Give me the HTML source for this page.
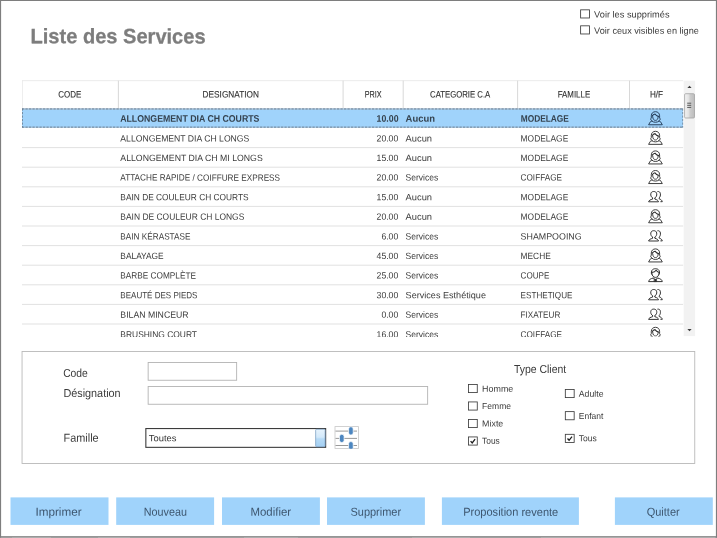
<!DOCTYPE html>
<html lang="fr">
<head>
<meta charset="utf-8">
<title>Liste des Services</title>
<style>
*{box-sizing:border-box;margin:0;padding:0}
html,body{width:717px;height:538px;overflow:hidden;background:#fff}
body{font-family:"Liberation Sans",sans-serif;font-size:9.7px;color:#3a3a3a;position:relative}
#root{position:absolute;left:0;top:0;width:717px;height:538px;overflow:hidden;will-change:transform;background:#fff;text-rendering:geometricPrecision}
#root div,#root span,#root svg{position:absolute}
#art{left:0;top:0}
.t{left:0;top:0;white-space:nowrap;display:block;transform-origin:0 0}
#grid{left:22px;top:80px;width:661.6px;height:256.5px;overflow:hidden}
#gin{left:-22px;top:-80px;width:717px;height:538px}
</style>
</head>
<body>
<div id="root">

<svg id="art" width="717" height="538" viewBox="0 0 717 538" style="color:#2a2a2a">
<defs>
<linearGradient id="gth" x1="0" x2="1" y1="0" y2="0"><stop offset="0" stop-color="#f4f4f4"/><stop offset=".4" stop-color="#e2e2e2"/><stop offset=".55" stop-color="#cdcdcd"/><stop offset="1" stop-color="#bcbcbc"/></linearGradient>
<linearGradient id="gdd" x1="0" x2="0" y1="0" y2="1"><stop offset="0" stop-color="#e6f3fd"/><stop offset=".45" stop-color="#d3e9fa"/><stop offset=".55" stop-color="#b6daf6"/><stop offset="1" stop-color="#a4d0f3"/></linearGradient>
<clipPath id="cg"><rect x="22" y="80" width="661.6" height="256.5"/></clipPath>
<clipPath id="cs"><rect x="334.6" y="426.2" width="24.3" height="22.6"/></clipPath>
</defs>
<rect x="0.00" y="0.00" width="717.00" height="1.00" fill="#7e7e7e"/>
<rect x="0.00" y="0.00" width="1.10" height="538.00" fill="#7e7e7e"/>
<rect x="715.90" y="0.00" width="1.10" height="538.00" fill="#7e7e7e"/>
<rect x="0.00" y="536.20" width="717.00" height="1.00" fill="#7c7c7c"/>
<rect x="0.00" y="537.20" width="717.00" height="0.80" fill="#8e8e8e"/>
<rect x="12.00" y="537.30" width="39.00" height="0.70" fill="#b4b4b4"/>
<rect x="98.00" y="537.30" width="32.00" height="0.70" fill="#b4b4b4"/>
<rect x="244.00" y="537.30" width="54.00" height="0.70" fill="#b4b4b4"/>
<rect x="412.00" y="537.30" width="58.00" height="0.70" fill="#b4b4b4"/>
<rect x="541.00" y="537.30" width="174.00" height="0.70" fill="#b4b4b4"/>
<rect x="580.62" y="9.83" width="8.85" height="8.15" fill="#fff" stroke="#3c3c3c" stroke-width="0.85"/>
<rect x="580.62" y="25.82" width="8.85" height="8.15" fill="#fff" stroke="#3c3c3c" stroke-width="0.85"/>
<g clip-path="url(#cg)">
<path d="M22.00 80.70H683.20" stroke="#e9e9e9" stroke-width="0.9"/>
<path d="M22.20 80.70V108.50" stroke="#e4e4e4" stroke-width="0.9"/>
<path d="M118.40 80.70V108.50" stroke="#d4d4d4" stroke-width="0.9"/>
<path d="M343.10 80.70V108.50" stroke="#d4d4d4" stroke-width="0.9"/>
<path d="M403.20 80.70V108.50" stroke="#d4d4d4" stroke-width="0.9"/>
<path d="M517.60 80.70V108.50" stroke="#d4d4d4" stroke-width="0.9"/>
<path d="M629.50 80.70V108.50" stroke="#d4d4d4" stroke-width="0.9"/>
<path d="M22.00 147.60H683.20" stroke="#dcdcdc" stroke-width="0.85"/>
<path d="M22.00 167.20H683.20" stroke="#dcdcdc" stroke-width="0.85"/>
<path d="M22.00 186.80H683.20" stroke="#dcdcdc" stroke-width="0.85"/>
<path d="M22.00 206.40H683.20" stroke="#dcdcdc" stroke-width="0.85"/>
<path d="M22.00 226.00H683.20" stroke="#dcdcdc" stroke-width="0.85"/>
<path d="M22.00 245.60H683.20" stroke="#dcdcdc" stroke-width="0.85"/>
<path d="M22.00 265.20H683.20" stroke="#dcdcdc" stroke-width="0.85"/>
<path d="M22.00 284.80H683.20" stroke="#dcdcdc" stroke-width="0.85"/>
<path d="M22.00 304.40H683.20" stroke="#dcdcdc" stroke-width="0.85"/>
<path d="M22.00 324.00H683.20" stroke="#dcdcdc" stroke-width="0.85"/>
<path d="M22.00 343.60H683.20" stroke="#dcdcdc" stroke-width="0.85"/>
<rect x="22.00" y="108.50" width="661.20" height="19.00" fill="#a0d3fb"/>
<path d="M22.00 108.95H683.20" stroke="#a9b4bf" stroke-width="0.85"/>
<path d="M22.00 108.95H683.20" stroke="#66778a" stroke-width="0.85" stroke-dasharray="2.2 1.3"/>
<path d="M22.00 127.15H683.20" stroke="#98b9d6" stroke-width="0.85"/>
<path d="M22.00 127.15H683.20" stroke="#66778a" stroke-width="0.85" stroke-dasharray="2.2 1.3"/>
<path d="M22.40 108.50V127.50" stroke="#66778a" stroke-width="0.85" stroke-dasharray="2.2 1.3"/>
<path d="M682.80 108.50V127.50" stroke="#66778a" stroke-width="0.85" stroke-dasharray="2.2 1.3"/>
<g transform="translate(648 108.40)" style="color:#1d3450" fill="none" stroke="currentColor" stroke-width=".9" stroke-linejoin="round" stroke-linecap="round">
<path d="M3.600 12.100C2.500 11.800 2.300 10.600 3.300 9.600V7.400C3.300 4.800 5.100 3.300 7.450 3.300S11.600 4.800 11.600 7.400V9.600C12.600 10.600 12.400 11.800 11.300 12.100"/>
<path d="M4.700 8.300C4.700 10.600 5.900 12 7.450 12S10.200 10.600 10.200 8.300"/>
<path d="M4.300 7.500C5 6.300 6 5.700 7 5.600 8 6.900 9 7.600 10.500 8" stroke-width="1.100"/>
<path d="M4.300 12.900C3.400 12.900 2.800 13 2.400 13.300L.6 16.350H14.300L12.500 13.300C12.100 13 11.500 12.900 10.600 12.900"/>
<path d="M4.300 12.900C5.300 14.300 9.600 14.300 10.600 12.900"/></g>
<g transform="translate(648 128.00)" fill="none" stroke="currentColor" stroke-width=".9" stroke-linejoin="round" stroke-linecap="round">
<path d="M3.600 12.100C2.500 11.800 2.300 10.600 3.300 9.600V7.400C3.300 4.800 5.100 3.300 7.450 3.300S11.600 4.800 11.600 7.400V9.600C12.600 10.600 12.400 11.800 11.300 12.100"/>
<path d="M4.700 8.300C4.700 10.600 5.900 12 7.450 12S10.200 10.600 10.200 8.300"/>
<path d="M4.300 7.500C5 6.300 6 5.700 7 5.600 8 6.900 9 7.600 10.500 8" stroke-width="1.100"/>
<path d="M4.300 12.900C3.400 12.900 2.800 13 2.400 13.300L.6 16.350H14.300L12.500 13.300C12.100 13 11.500 12.900 10.600 12.900"/>
<path d="M4.300 12.900C5.300 14.300 9.600 14.300 10.600 12.900"/></g>
<g transform="translate(648 147.60)" fill="none" stroke="currentColor" stroke-width=".9" stroke-linejoin="round" stroke-linecap="round">
<path d="M3.600 12.100C2.500 11.800 2.300 10.600 3.300 9.600V7.400C3.300 4.800 5.100 3.300 7.450 3.300S11.600 4.800 11.600 7.400V9.600C12.600 10.600 12.400 11.800 11.300 12.100"/>
<path d="M4.700 8.300C4.700 10.600 5.900 12 7.450 12S10.200 10.600 10.200 8.300"/>
<path d="M4.300 7.500C5 6.300 6 5.700 7 5.600 8 6.900 9 7.600 10.500 8" stroke-width="1.100"/>
<path d="M4.300 12.900C3.400 12.900 2.800 13 2.400 13.300L.6 16.350H14.300L12.500 13.300C12.100 13 11.500 12.900 10.600 12.900"/>
<path d="M4.300 12.900C5.300 14.300 9.600 14.300 10.600 12.900"/></g>
<g transform="translate(648 167.20)" fill="none" stroke="currentColor" stroke-width=".9" stroke-linejoin="round" stroke-linecap="round">
<path d="M3.600 12.100C2.500 11.800 2.300 10.600 3.300 9.600V7.400C3.300 4.800 5.100 3.300 7.450 3.300S11.600 4.800 11.600 7.400V9.600C12.600 10.600 12.400 11.800 11.300 12.100"/>
<path d="M4.700 8.300C4.700 10.600 5.900 12 7.450 12S10.200 10.600 10.200 8.300"/>
<path d="M4.300 7.500C5 6.300 6 5.700 7 5.600 8 6.900 9 7.600 10.500 8" stroke-width="1.100"/>
<path d="M4.300 12.900C3.400 12.900 2.800 13 2.400 13.300L.6 16.350H14.300L12.500 13.300C12.100 13 11.500 12.900 10.600 12.900"/>
<path d="M4.300 12.900C5.300 14.300 9.600 14.300 10.600 12.900"/></g>
<g transform="translate(648 186.80)" fill="none" stroke="currentColor" stroke-width=".95" stroke-linejoin="round" stroke-linecap="round">
<path d="M4.600 11.300C3.200 10.300 2.500 8.600 2.800 7 3.100 5.300 4.200 4.700 5.750 4.700S8.400 5.300 8.700 7C9 8.600 8.300 10.300 6.900 11.300"/>
<path d="M4.600 11.300V12.300C2.600 12.900 1 13.400 .6 15H10.500C10.100 13.400 8.900 12.900 6.900 12.300V11.300"/>
<path d="M9.800 4.700C11.300 4.500 12.200 5.400 12.400 7 12.600 8.600 12.200 10.100 11.200 11.100V12.100C12.800 12.600 13.900 13.300 14.300 14.900H12.800"/></g>
<g transform="translate(648 206.40)" fill="none" stroke="currentColor" stroke-width=".9" stroke-linejoin="round" stroke-linecap="round">
<path d="M3.600 12.100C2.500 11.800 2.300 10.600 3.300 9.600V7.400C3.300 4.800 5.100 3.300 7.450 3.300S11.600 4.800 11.600 7.400V9.600C12.600 10.600 12.400 11.800 11.300 12.100"/>
<path d="M4.700 8.300C4.700 10.600 5.900 12 7.450 12S10.200 10.600 10.200 8.300"/>
<path d="M4.300 7.500C5 6.300 6 5.700 7 5.600 8 6.900 9 7.600 10.500 8" stroke-width="1.100"/>
<path d="M4.300 12.900C3.400 12.900 2.800 13 2.400 13.300L.6 16.350H14.300L12.500 13.300C12.100 13 11.500 12.900 10.600 12.900"/>
<path d="M4.300 12.900C5.300 14.300 9.600 14.300 10.600 12.900"/></g>
<g transform="translate(648 226.00)" fill="none" stroke="currentColor" stroke-width=".95" stroke-linejoin="round" stroke-linecap="round">
<path d="M4.600 11.300C3.200 10.300 2.500 8.600 2.800 7 3.100 5.300 4.200 4.700 5.750 4.700S8.400 5.300 8.700 7C9 8.600 8.300 10.300 6.900 11.300"/>
<path d="M4.600 11.300V12.300C2.600 12.900 1 13.400 .6 15H10.500C10.100 13.400 8.900 12.900 6.900 12.300V11.300"/>
<path d="M9.800 4.700C11.300 4.500 12.200 5.400 12.400 7 12.600 8.600 12.200 10.100 11.200 11.100V12.100C12.800 12.600 13.900 13.300 14.300 14.900H12.800"/></g>
<g transform="translate(648 245.60)" fill="none" stroke="currentColor" stroke-width=".9" stroke-linejoin="round" stroke-linecap="round">
<path d="M3.600 12.100C2.500 11.800 2.300 10.600 3.300 9.600V7.400C3.300 4.800 5.100 3.300 7.450 3.300S11.600 4.800 11.600 7.400V9.600C12.600 10.600 12.400 11.800 11.300 12.100"/>
<path d="M4.700 8.300C4.700 10.600 5.900 12 7.450 12S10.200 10.600 10.200 8.300"/>
<path d="M4.300 7.500C5 6.300 6 5.700 7 5.600 8 6.900 9 7.600 10.500 8" stroke-width="1.100"/>
<path d="M4.300 12.900C3.400 12.900 2.800 13 2.400 13.300L.6 16.350H14.300L12.500 13.300C12.100 13 11.500 12.900 10.600 12.900"/>
<path d="M4.300 12.900C5.300 14.300 9.600 14.300 10.600 12.900"/></g>
<g transform="translate(648 265.20)" fill="none" stroke="currentColor" stroke-width=".95" stroke-linejoin="round" stroke-linecap="round">
<path d="M3.500 8.900C2.700 5.400 4.500 3.500 7.450 3.500S12.200 5.400 11.400 8.900"/>
<path d="M3.800 7.200C5.900 7.100 7.300 6.300 8.100 5 8.900 6.200 10 7 11.100 7.300" stroke-width="1.100"/>
<path d="M4 8.400C4 10.600 5.500 12.200 7.450 12.200S10.900 10.600 10.900 8.400"/>
<path d="M5 12.900C2.600 13.500 1 14.200 .6 16.400H14.300C13.900 14.200 12.300 13.500 9.900 12.900"/>
<path d="M6.300 14.100h2.300v2.300h-2.300z" fill="currentColor" stroke-width=".5"/>
<path d="M5.300 13 7.450 14.300 9.600 13" stroke-width=".8"/></g>
<g transform="translate(648 284.80)" fill="none" stroke="currentColor" stroke-width=".95" stroke-linejoin="round" stroke-linecap="round">
<path d="M4.600 11.300C3.200 10.300 2.500 8.600 2.800 7 3.100 5.300 4.200 4.700 5.750 4.700S8.400 5.300 8.700 7C9 8.600 8.300 10.300 6.900 11.300"/>
<path d="M4.600 11.300V12.300C2.600 12.900 1 13.400 .6 15H10.500C10.100 13.400 8.900 12.900 6.900 12.300V11.300"/>
<path d="M9.800 4.700C11.300 4.500 12.200 5.400 12.400 7 12.600 8.600 12.200 10.100 11.200 11.100V12.100C12.800 12.600 13.900 13.300 14.300 14.900H12.800"/></g>
<g transform="translate(648 304.40)" fill="none" stroke="currentColor" stroke-width=".95" stroke-linejoin="round" stroke-linecap="round">
<path d="M4.600 11.300C3.200 10.300 2.500 8.600 2.800 7 3.100 5.300 4.200 4.700 5.750 4.700S8.400 5.300 8.700 7C9 8.600 8.300 10.300 6.900 11.300"/>
<path d="M4.600 11.300V12.300C2.600 12.900 1 13.400 .6 15H10.500C10.100 13.400 8.900 12.900 6.900 12.300V11.300"/>
<path d="M9.800 4.700C11.300 4.500 12.200 5.400 12.400 7 12.600 8.600 12.200 10.100 11.200 11.100V12.100C12.800 12.600 13.900 13.300 14.300 14.900H12.800"/></g>
<g transform="translate(648 324.00)" fill="none" stroke="currentColor" stroke-width=".9" stroke-linejoin="round" stroke-linecap="round">
<path d="M3.600 12.100C2.500 11.800 2.300 10.600 3.300 9.600V7.400C3.300 4.800 5.100 3.300 7.450 3.300S11.600 4.800 11.600 7.400V9.600C12.600 10.600 12.400 11.800 11.300 12.100"/>
<path d="M4.700 8.300C4.700 10.600 5.900 12 7.450 12S10.200 10.600 10.200 8.300"/>
<path d="M4.300 7.500C5 6.300 6 5.700 7 5.600 8 6.900 9 7.600 10.500 8" stroke-width="1.100"/>
<path d="M4.300 12.900C3.400 12.900 2.800 13 2.400 13.300L.6 16.350H14.300L12.500 13.300C12.100 13 11.500 12.900 10.600 12.900"/>
<path d="M4.300 12.900C5.300 14.300 9.600 14.300 10.600 12.900"/></g>
</g>
<rect x="683.70" y="80.70" width="11.40" height="255.40" fill="#f2f2f2"/>
<rect x="684.60" y="93.70" width="9.90" height="24.30" fill="url(#gth)" stroke="#a3a3a3" stroke-width="0.8" rx="1.1"/>
<path d="M687.400 88 689.500 85.800 691.600 88z" fill="#3c3c3c"/>
<path d="M687.400 329 689.500 331.200 691.600 329z" fill="#3c3c3c"/>
<path d="M687.200 103.200h4M687.200 105.300h4M687.200 107.400h4" stroke="#4a4a4a" stroke-width=".9"/>
<rect x="22.05" y="351.55" width="672.70" height="112.00" fill="none" stroke="#b9b9b9" stroke-width="0.9"/>
<rect x="148.15" y="362.45" width="88.50" height="17.80" fill="#fff" stroke="#b3b3b3" stroke-width="0.9"/>
<rect x="148.15" y="386.45" width="279.50" height="17.80" fill="#fff" stroke="#b3b3b3" stroke-width="0.9"/>
<rect x="145.85" y="428.55" width="179.80" height="18.80" fill="#fff" stroke="#3c3c3c" stroke-width="1.1"/>
<rect x="315.65" y="429.25" width="9.50" height="17.50" fill="url(#gdd)" stroke="#7097bb" stroke-width="0.7" rx="1"/>
<rect x="335.00" y="426.60" width="23.50" height="21.80" fill="#fff" stroke="#c6c6c6" stroke-width="0.8"/>
<g clip-path="url(#cs)">
<path d="M335.50 431.10H357.00" stroke="#9a9a9a" stroke-width="1"/>
<path d="M335.50 438.40H357.00" stroke="#9a9a9a" stroke-width="1"/>
<path d="M335.50 445.50H357.00" stroke="#9a9a9a" stroke-width="1"/>
<rect x="348.60" y="426.80" width="4.60" height="8.20" fill="#4c86c0" stroke="#fff" stroke-width="0.7" rx="2.2"/>
<rect x="339.50" y="434.30" width="4.60" height="8.20" fill="#4c86c0" stroke="#fff" stroke-width="0.7" rx="2.2"/>
<rect x="348.60" y="441.60" width="4.60" height="8.20" fill="#4c86c0" stroke="#fff" stroke-width="0.7" rx="2.2"/>
</g>
<rect x="468.43" y="384.43" width="8.85" height="8.15" fill="#fff" stroke="#3c3c3c" stroke-width="0.85"/>
<rect x="468.43" y="401.93" width="8.85" height="8.15" fill="#fff" stroke="#3c3c3c" stroke-width="0.85"/>
<rect x="468.43" y="419.43" width="8.85" height="8.15" fill="#fff" stroke="#3c3c3c" stroke-width="0.85"/>
<rect x="468.43" y="436.93" width="8.85" height="8.15" fill="#fff" stroke="#3c3c3c" stroke-width="0.85"/>
<path d="M470.60 441.10l1.6 1.800 2.900-3.700" fill="none" stroke="#1c1c1c" stroke-width="1.3"/>
<rect x="565.32" y="389.43" width="8.85" height="8.15" fill="#fff" stroke="#3c3c3c" stroke-width="0.85"/>
<rect x="565.32" y="411.62" width="8.85" height="8.15" fill="#fff" stroke="#3c3c3c" stroke-width="0.85"/>
<rect x="565.32" y="434.32" width="8.85" height="8.15" fill="#fff" stroke="#3c3c3c" stroke-width="0.85"/>
<path d="M567.50 438.50l1.6 1.800 2.900-3.700" fill="none" stroke="#1c1c1c" stroke-width="1.3"/>
<rect x="10.50" y="497.40" width="98.00" height="27.50" fill="#a0d3fb"/>
<rect x="116.20" y="497.40" width="97.90" height="27.50" fill="#a0d3fb"/>
<rect x="222.00" y="497.40" width="97.90" height="27.50" fill="#a0d3fb"/>
<rect x="327.00" y="497.40" width="97.90" height="27.50" fill="#a0d3fb"/>
<rect x="441.90" y="497.40" width="137.00" height="27.50" fill="#a0d3fb"/>
<rect x="614.90" y="497.40" width="97.90" height="27.50" fill="#a0d3fb"/>
</svg>
<!-- texts -->
<span class="t" style="font-size:20.9px;line-height:27.17px;transform:translate(30.54px,23.29px) rotate(0.04deg) scaleX(0.9601);color:#7d7d7d;font-weight:bold;-webkit-text-stroke:0.3px #7d7d7d">Liste des Services</span>
<span class="t" style="font-size:9.1px;line-height:11.83px;transform:translate(594.10px,9.53px) rotate(0.04deg) scaleX(1.0154);color:#3a3a3a">Voir les supprimés</span>
<span class="t" style="font-size:9.1px;line-height:11.83px;transform:translate(594.10px,25.63px) rotate(0.04deg) scaleX(1.0060);color:#3a3a3a">Voir ceux visibles en ligne</span>
<span class="t" style="font-size:9.3px;line-height:12.09px;transform:translate(58.20px,88.40px) rotate(0.04deg) scaleX(0.8590);color:#333333;-webkit-text-stroke:0.12px #333333">CODE</span>
<span class="t" style="font-size:9.3px;line-height:12.09px;transform:translate(202.60px,88.40px) rotate(0.04deg) scaleX(0.8891);color:#333333;-webkit-text-stroke:0.12px #333333">DESIGNATION</span>
<span class="t" style="font-size:9.3px;line-height:12.09px;transform:translate(364.80px,88.40px) rotate(0.04deg) scaleX(0.7768);color:#333333;-webkit-text-stroke:0.12px #333333">PRIX</span>
<span class="t" style="font-size:9.3px;line-height:12.09px;transform:translate(430.10px,88.40px) rotate(0.04deg) scaleX(0.8335);color:#333333;-webkit-text-stroke:0.12px #333333">CATEGORIE C.A</span>
<span class="t" style="font-size:9.3px;line-height:12.09px;transform:translate(557.70px,88.40px) rotate(0.04deg) scaleX(0.8492);color:#333333;-webkit-text-stroke:0.12px #333333">FAMILLE</span>
<span class="t" style="font-size:9.3px;line-height:12.09px;transform:translate(649.90px,88.40px) rotate(0.04deg) scaleX(0.8760);color:#333333;-webkit-text-stroke:0.12px #333333">H/F</span>
<span class="t" style="font-size:11.6px;line-height:15.08px;transform:translate(63.20px,365.99px) rotate(0.04deg) scaleX(0.8875);color:#3a3a3a">Code</span>
<span class="t" style="font-size:11.6px;line-height:15.08px;transform:translate(63.40px,386.04px) rotate(0.04deg) scaleX(0.9345);color:#3a3a3a">Désignation</span>
<span class="t" style="font-size:11.6px;line-height:15.08px;transform:translate(63.60px,430.84px) rotate(0.04deg) scaleX(0.9373);color:#3a3a3a">Famille</span>
<span class="t" style="font-size:9.1px;line-height:11.83px;transform:translate(148.80px,433.33px) rotate(0.04deg) scaleX(1.0350);color:#333">Toutes</span>
<span class="t" style="font-size:11.6px;line-height:15.08px;transform:translate(513.90px,362.09px) rotate(0.04deg) scaleX(0.9017);color:#3a3a3a">Type Client</span>
<span class="t" style="font-size:8.8px;line-height:11.44px;transform:translate(482.10px,383.63px) rotate(0.04deg) scaleX(1.0129);color:#3a3a3a">Homme</span>
<span class="t" style="font-size:8.8px;line-height:11.44px;transform:translate(482.10px,401.03px) rotate(0.04deg) scaleX(0.9692);color:#3a3a3a">Femme</span>
<span class="t" style="font-size:8.8px;line-height:11.44px;transform:translate(482.10px,418.43px) rotate(0.04deg) scaleX(1.0083);color:#3a3a3a">Mixte</span>
<span class="t" style="font-size:8.8px;line-height:11.44px;transform:translate(482.10px,435.83px) rotate(0.04deg) scaleX(0.9540);color:#3a3a3a">Tous</span>
<span class="t" style="font-size:8.8px;line-height:11.44px;transform:translate(578.80px,388.63px) rotate(0.04deg) scaleX(0.9900);color:#3a3a3a">Adulte</span>
<span class="t" style="font-size:8.8px;line-height:11.44px;transform:translate(578.80px,410.93px) rotate(0.04deg) scaleX(0.9620);color:#3a3a3a">Enfant</span>
<span class="t" style="font-size:8.8px;line-height:11.44px;transform:translate(578.80px,433.13px) rotate(0.04deg) scaleX(0.9696);color:#3a3a3a">Tous</span>
<div id="grid"><div id="gin">
<span class="t" style="font-size:9.6px;line-height:12.48px;transform:translate(120.20px,113.65px) rotate(0.04deg) scaleX(0.9123);color:#34424f;font-weight:bold">ALLONGEMENT DIA CH COURTS</span>
<span class="t" style="font-size:9.6px;line-height:12.48px;transform:translate(376.60px,113.65px) rotate(0.04deg) scaleX(0.9125);color:#34424f;font-weight:bold">10.00</span>
<span class="t" style="font-size:9.6px;line-height:12.48px;transform:translate(405.60px,113.65px) rotate(0.04deg) scaleX(0.9838);color:#34424f;font-weight:bold">Aucun</span>
<span class="t" style="font-size:9.6px;line-height:12.48px;transform:translate(520.70px,113.65px) rotate(0.04deg) scaleX(0.8691);color:#34424f;font-weight:bold">MODELAGE</span>
<span class="t" style="font-size:9.1px;line-height:11.83px;transform:translate(120.35px,133.38px) rotate(0.04deg) scaleX(0.9500);color:#3b3b3b">ALLONGEMENT DIA CH LONGS</span>
<span class="t" style="font-size:9.1px;line-height:11.83px;transform:translate(376.60px,133.38px) rotate(0.04deg) scaleX(0.9516);color:#3b3b3b">20.00</span>
<span class="t" style="font-size:9.1px;line-height:11.83px;transform:translate(405.60px,133.38px) rotate(0.04deg) scaleX(1.0261);color:#3b3b3b">Aucun</span>
<span class="t" style="font-size:9.1px;line-height:11.83px;transform:translate(520.60px,133.38px) rotate(0.04deg) scaleX(0.9247);color:#3b3b3b">MODELAGE</span>
<span class="t" style="font-size:9.1px;line-height:11.83px;transform:translate(120.35px,152.98px) rotate(0.04deg) scaleX(0.9594);color:#3b3b3b">ALLONGEMENT DIA CH MI LONGS</span>
<span class="t" style="font-size:9.1px;line-height:11.83px;transform:translate(376.60px,152.98px) rotate(0.04deg) scaleX(0.9516);color:#3b3b3b">15.00</span>
<span class="t" style="font-size:9.1px;line-height:11.83px;transform:translate(405.60px,152.98px) rotate(0.04deg) scaleX(1.0261);color:#3b3b3b">Aucun</span>
<span class="t" style="font-size:9.1px;line-height:11.83px;transform:translate(520.60px,152.98px) rotate(0.04deg) scaleX(0.9247);color:#3b3b3b">MODELAGE</span>
<span class="t" style="font-size:9.1px;line-height:11.83px;transform:translate(120.35px,172.58px) rotate(0.04deg) scaleX(0.9022);color:#3b3b3b">ATTACHE RAPIDE / COIFFURE EXPRESS</span>
<span class="t" style="font-size:9.1px;line-height:11.83px;transform:translate(376.60px,172.58px) rotate(0.04deg) scaleX(0.9516);color:#3b3b3b">20.00</span>
<span class="t" style="font-size:9.1px;line-height:11.83px;transform:translate(405.60px,172.58px) rotate(0.04deg) scaleX(0.9371);color:#3b3b3b">Services</span>
<span class="t" style="font-size:9.1px;line-height:11.83px;transform:translate(520.60px,172.58px) rotate(0.04deg) scaleX(0.8995);color:#3b3b3b">COIFFAGE</span>
<span class="t" style="font-size:9.1px;line-height:11.83px;transform:translate(120.35px,192.18px) rotate(0.04deg) scaleX(0.9171);color:#3b3b3b">BAIN DE COULEUR CH COURTS</span>
<span class="t" style="font-size:9.1px;line-height:11.83px;transform:translate(376.60px,192.18px) rotate(0.04deg) scaleX(0.9516);color:#3b3b3b">15.00</span>
<span class="t" style="font-size:9.1px;line-height:11.83px;transform:translate(405.60px,192.18px) rotate(0.04deg) scaleX(1.0261);color:#3b3b3b">Aucun</span>
<span class="t" style="font-size:9.1px;line-height:11.83px;transform:translate(520.60px,192.18px) rotate(0.04deg) scaleX(0.9247);color:#3b3b3b">MODELAGE</span>
<span class="t" style="font-size:9.1px;line-height:11.83px;transform:translate(120.35px,211.78px) rotate(0.04deg) scaleX(0.9289);color:#3b3b3b">BAIN DE COULEUR CH LONGS</span>
<span class="t" style="font-size:9.1px;line-height:11.83px;transform:translate(376.60px,211.78px) rotate(0.04deg) scaleX(0.9516);color:#3b3b3b">20.00</span>
<span class="t" style="font-size:9.1px;line-height:11.83px;transform:translate(405.60px,211.78px) rotate(0.04deg) scaleX(1.0261);color:#3b3b3b">Aucun</span>
<span class="t" style="font-size:9.1px;line-height:11.83px;transform:translate(520.60px,211.78px) rotate(0.04deg) scaleX(0.9247);color:#3b3b3b">MODELAGE</span>
<span class="t" style="font-size:9.1px;line-height:11.83px;transform:translate(120.35px,231.38px) rotate(0.04deg) scaleX(0.9028);color:#3b3b3b">BAIN KÉRASTASE</span>
<span class="t" style="font-size:9.1px;line-height:11.83px;transform:translate(381.41px,231.38px) rotate(0.04deg) scaleX(0.9516);color:#3b3b3b">6.00</span>
<span class="t" style="font-size:9.1px;line-height:11.83px;transform:translate(405.60px,231.38px) rotate(0.04deg) scaleX(0.9371);color:#3b3b3b">Services</span>
<span class="t" style="font-size:9.1px;line-height:11.83px;transform:translate(520.60px,231.38px) rotate(0.04deg) scaleX(0.9748);color:#3b3b3b">SHAMPOOING</span>
<span class="t" style="font-size:9.1px;line-height:11.83px;transform:translate(120.35px,250.98px) rotate(0.04deg) scaleX(0.9181);color:#3b3b3b">BALAYAGE</span>
<span class="t" style="font-size:9.1px;line-height:11.83px;transform:translate(376.60px,250.98px) rotate(0.04deg) scaleX(0.9516);color:#3b3b3b">45.00</span>
<span class="t" style="font-size:9.1px;line-height:11.83px;transform:translate(405.60px,250.98px) rotate(0.04deg) scaleX(0.9371);color:#3b3b3b">Services</span>
<span class="t" style="font-size:9.1px;line-height:11.83px;transform:translate(520.60px,250.98px) rotate(0.04deg) scaleX(0.9184);color:#3b3b3b">MECHE</span>
<span class="t" style="font-size:9.1px;line-height:11.83px;transform:translate(120.35px,270.58px) rotate(0.04deg) scaleX(0.9068);color:#3b3b3b">BARBE COMPLÈTE</span>
<span class="t" style="font-size:9.1px;line-height:11.83px;transform:translate(376.60px,270.58px) rotate(0.04deg) scaleX(0.9516);color:#3b3b3b">25.00</span>
<span class="t" style="font-size:9.1px;line-height:11.83px;transform:translate(405.60px,270.58px) rotate(0.04deg) scaleX(0.9371);color:#3b3b3b">Services</span>
<span class="t" style="font-size:9.1px;line-height:11.83px;transform:translate(520.60px,270.58px) rotate(0.04deg) scaleX(0.8893);color:#3b3b3b">COUPE</span>
<span class="t" style="font-size:9.1px;line-height:11.83px;transform:translate(120.35px,290.18px) rotate(0.04deg) scaleX(0.8820);color:#3b3b3b">BEAUTÉ DES PIEDS</span>
<span class="t" style="font-size:9.1px;line-height:11.83px;transform:translate(376.60px,290.18px) rotate(0.04deg) scaleX(0.9516);color:#3b3b3b">30.00</span>
<span class="t" style="font-size:9.1px;line-height:11.83px;transform:translate(405.60px,290.18px) rotate(0.04deg) scaleX(0.9998);color:#3b3b3b">Services Esthétique</span>
<span class="t" style="font-size:9.1px;line-height:11.83px;transform:translate(520.60px,290.18px) rotate(0.04deg) scaleX(0.8925);color:#3b3b3b">ESTHETIQUE</span>
<span class="t" style="font-size:9.1px;line-height:11.83px;transform:translate(120.35px,309.78px) rotate(0.04deg) scaleX(0.9578);color:#3b3b3b">BILAN MINCEUR</span>
<span class="t" style="font-size:9.1px;line-height:11.83px;transform:translate(381.41px,309.78px) rotate(0.04deg) scaleX(0.9516);color:#3b3b3b">0.00</span>
<span class="t" style="font-size:9.1px;line-height:11.83px;transform:translate(405.60px,309.78px) rotate(0.04deg) scaleX(0.9371);color:#3b3b3b">Services</span>
<span class="t" style="font-size:9.1px;line-height:11.83px;transform:translate(520.60px,309.78px) rotate(0.04deg) scaleX(0.8966);color:#3b3b3b">FIXATEUR</span>
<span class="t" style="font-size:9.1px;line-height:11.83px;transform:translate(120.35px,329.38px) rotate(0.04deg) scaleX(0.9268);color:#3b3b3b">BRUSHING COURT</span>
<span class="t" style="font-size:9.1px;line-height:11.83px;transform:translate(376.60px,329.38px) rotate(0.04deg) scaleX(0.9516);color:#3b3b3b">16.00</span>
<span class="t" style="font-size:9.1px;line-height:11.83px;transform:translate(405.60px,329.38px) rotate(0.04deg) scaleX(0.9371);color:#3b3b3b">Services</span>
<span class="t" style="font-size:9.1px;line-height:11.83px;transform:translate(520.60px,329.38px) rotate(0.04deg) scaleX(0.8995);color:#3b3b3b">COIFFAGE</span>
</div></div>
<span class="t" style="font-size:11.6px;line-height:15.08px;transform:translate(35.49px,504.84px) rotate(0.04deg) scaleX(1.0074);color:#3d566f">Imprimer</span>
<span class="t" style="font-size:11.6px;line-height:15.08px;transform:translate(143.80px,504.84px) rotate(0.04deg) scaleX(0.9290);color:#3d566f">Nouveau</span>
<span class="t" style="font-size:11.6px;line-height:15.08px;transform:translate(250.50px,504.84px) rotate(0.04deg) scaleX(0.9837);color:#3d566f">Modifier</span>
<span class="t" style="font-size:11.6px;line-height:15.08px;transform:translate(350.50px,504.84px) rotate(0.04deg) scaleX(0.9456);color:#3d566f">Supprimer</span>
<span class="t" style="font-size:11.6px;line-height:15.08px;transform:translate(463.20px,504.84px) rotate(0.04deg) scaleX(0.9513);color:#3d566f">Proposition revente</span>
<span class="t" style="font-size:11.6px;line-height:15.08px;transform:translate(646.70px,504.84px) rotate(0.04deg) scaleX(0.9476);color:#3d566f">Quitter</span>
</div>
</body>
</html>
